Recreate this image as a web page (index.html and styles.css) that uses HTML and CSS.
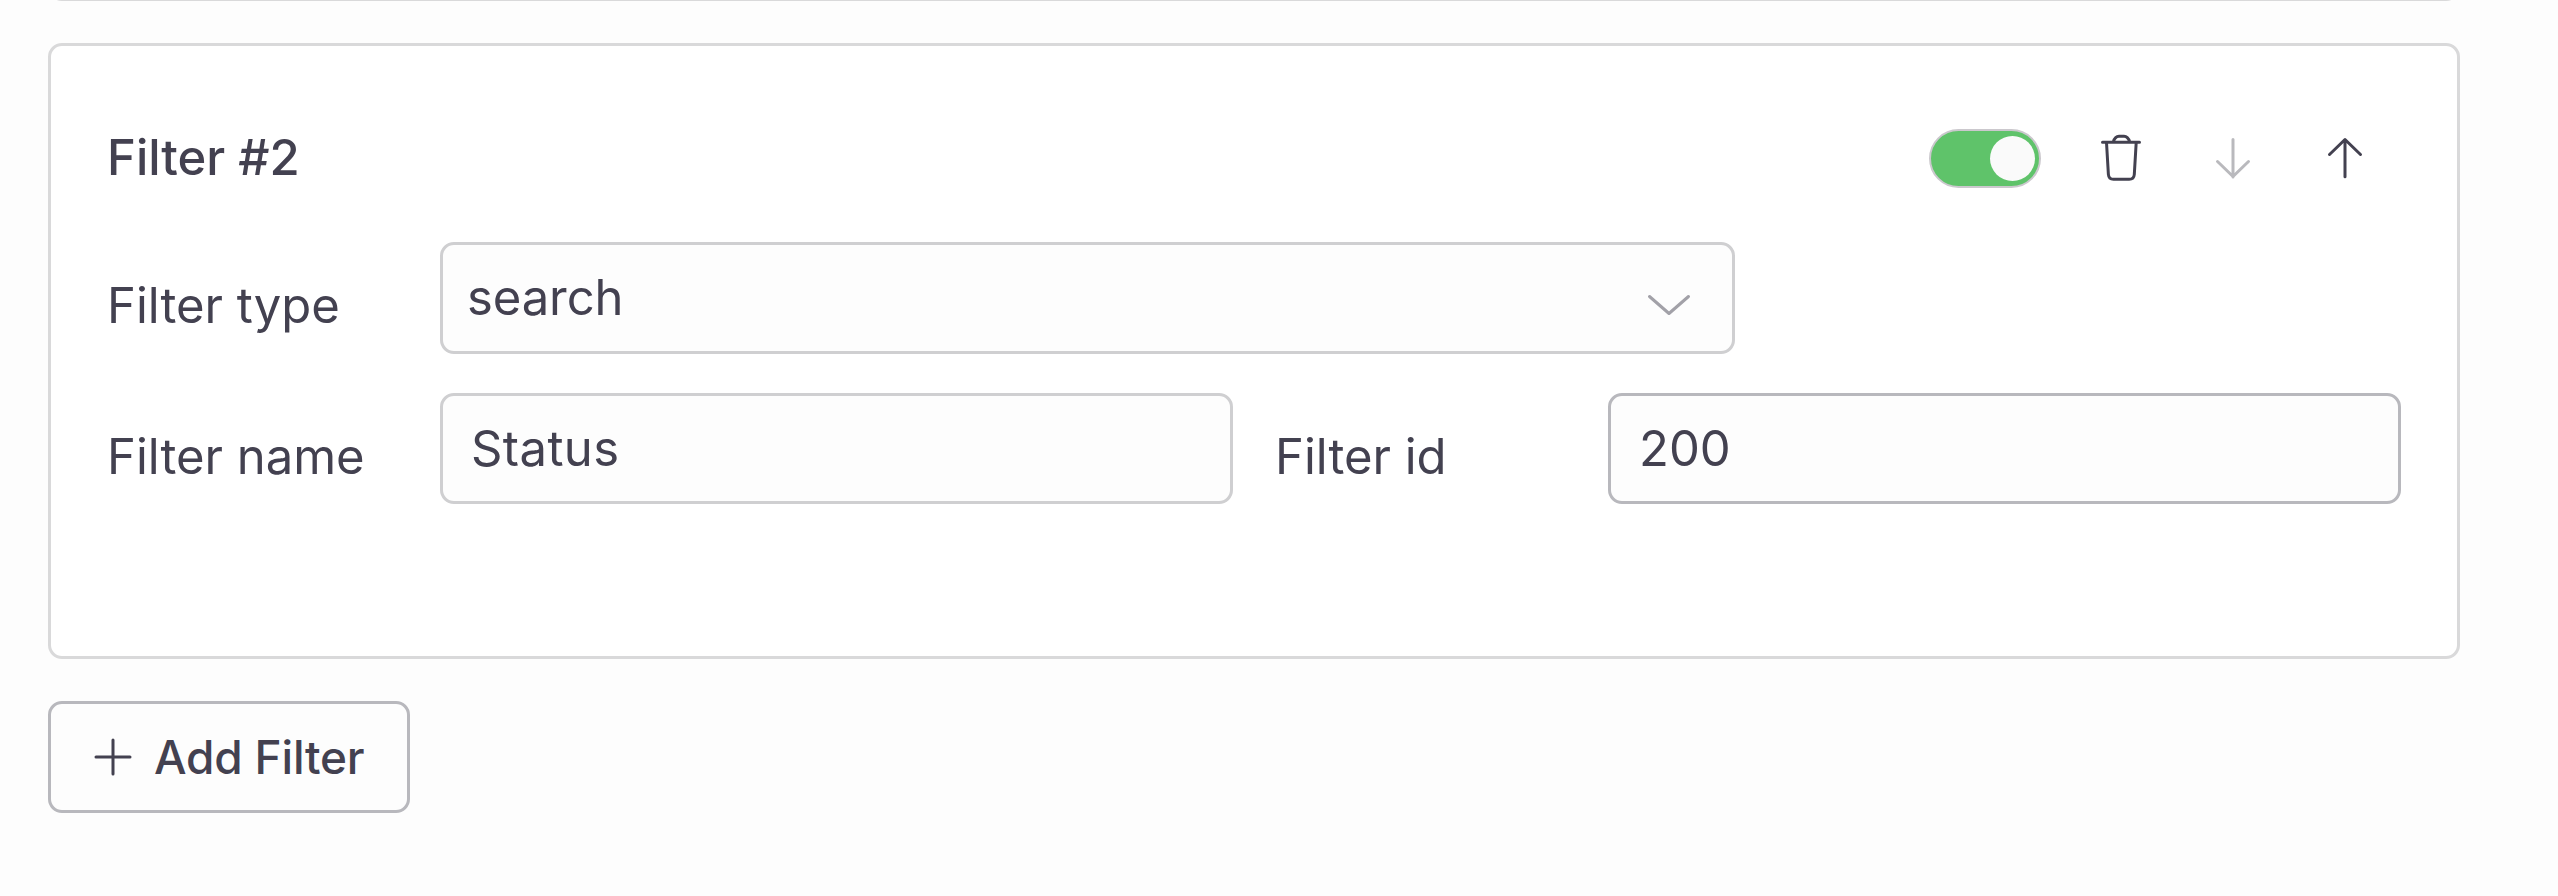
FILE: index.html
```html
<!DOCTYPE html>
<html lang="en">
<head>
<meta charset="utf-8">
<title>Filters</title>
<link rel="stylesheet" href="styles.css">
</head>
<body>
<main class="filters">
  <section class="card card-previous"></section>
  <section class="card">
    <header class="card-header">
      <h2 class="card-title">Filter #2</h2>
      <div class="actions">
        <span class="toggle" role="switch" aria-checked="true"><span class="knob"></span></span>
        <svg class="icon" viewBox="0 0 56 56"><path d="M9.5 12.2H46.500M13.500 12.500L15.400 44.500Q15.800 49.300 20.500 49.300H36.200Q40.900 49.300 41.300 44.500L43.200 12.500M20.300 12Q22 6.300 26 6.300H31Q35 6.300 36.700 12"/></svg>
        <svg class="icon disabled" viewBox="0 0 56 56"><path d="M28 9.500V47M12.500 31.500L28 46.500L43.500 31.500"/></svg>
        <svg class="icon" viewBox="0 0 56 56"><path d="M28 46.800V9.500M12.500 24.500L28 9.500L43.500 24.500"/></svg>
      </div>
    </header>
    <div class="row">
      <label class="label">Filter type</label>
      <div class="field select"><span>search</span>
        <svg class="chevron" viewBox="0 0 44 24"><path d="M2.500 3.500L22 20.500L41.500 3.500"/></svg>
      </div>
    </div>
    <div class="row">
      <label class="label">Filter name</label>
      <div class="field input name">Status</div>
      <label class="label label-second">Filter id</label>
      <div class="field input active">200</div>
    </div>
  </section>
  <button class="add" type="button">
    <svg class="plus" viewBox="0 0 40 40"><path d="M20 3V37M3 20H37"/></svg>
    <span>Add Filter</span>
  </button>
</main>
</body>
</html>
```
FILE: styles.css
```css
* { box-sizing: border-box; }
body {
  margin: 0;
  height: 896px;
  overflow: hidden;
  background: #fdfdfd;
  color: #434150;
  font-family: Inter, "Liberation Sans", sans-serif;
}
.filters {
  display: flex;
  flex-direction: column;
  align-items: flex-start;
  gap: 42px;
  padding-left: 48px;
}
.card {
  width: 2412px;
  height: 616px;
  padding: 65px 56px 0 56px;
  border: 3px solid #d9d9da;
  border-radius: 14px;
  background: #fff;
}
.card-previous { height: 40px; margin-top: -39px; padding: 0; }
.card-header {
  display: flex;
  align-items: center;
  justify-content: space-between;
  height: 94px;
  margin-bottom: 37px;
  padding-right: 28px;
}
.card-title {
  margin: 0;
  font-size: 49px;
  line-height: 60px;
  font-weight: 500;
}
.actions { display: flex; align-items: center; gap: 56px; }
.toggle {
  display: flex;
  align-items: center;
  justify-content: flex-end;
  width: 112px;
  height: 59px;
  margin-right: -4px;
  padding-right: 4px;
  border: 2px solid #cbc8cd;
  border-radius: 30px;
  background: #5fc36a;
}
.knob { width: 45px; height: 45px; border-radius: 50%; background: #fafafa; }
.icon, .chevron, .plus {
  fill: none;
  stroke: #434150;
  stroke-width: 3;
  stroke-linecap: round;
  stroke-linejoin: round;
}
.icon { width: 56px; height: 56px; }
.disabled { stroke: #b9b9bd; }
.row { display: flex; height: 111px; margin-bottom: 40px; }
.label {
  width: 333px;
  padding-top: 34px;
  font-size: 49px;
  line-height: 60px;
}
.label-second { margin-left: 42px; }
.field {
  width: 793px;
  height: 111px;
  border: 3px solid #cfcfd1;
  border-radius: 14px;
  background: #fdfdfd;
  font-size: 49px;
  line-height: 60px;
}
.select {
  display: flex;
  justify-content: space-between;
  width: 1295px;
  height: 112px;
  padding: 23px 41px 0 24px;
  letter-spacing: -0.1px;
}
.input { padding: 23px 28px; }
.name { letter-spacing: 0.4px; }
.active { border-color: #b8b8bd; }
.chevron { width: 44px; height: 24px; margin-top: 25px; stroke: #a2a1a8; }
.add {
  display: flex;
  align-items: center;
  gap: 21px;
  width: 362px;
  height: 112px;
  padding: 0 0 0 42px;
  border: 3px solid #b8b8bd;
  border-radius: 14px;
  background: #fdfdfd;
  color: inherit;
  font: 500 46px/56px Inter, "Liberation Sans", sans-serif;
  letter-spacing: -0.2px;
  white-space: nowrap;
}
.plus { flex: none; width: 40px; height: 40px; }
```
